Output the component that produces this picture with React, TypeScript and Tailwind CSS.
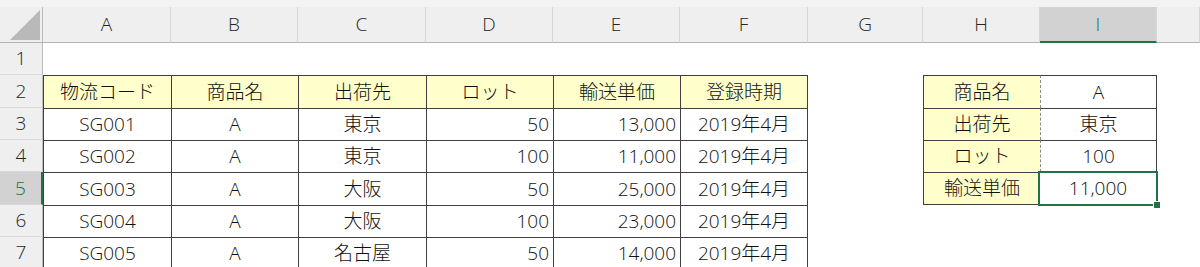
import React from 'react';

const letters = ['A', 'B', 'C', 'D', 'E', 'F', 'G', 'H', 'I', ''];

const headerRow = ['物流コード', '商品名', '出荷先', 'ロット', '輸送単価', '登録時期'];

const dataRows = [
  ['SG001', 'A', '東京', '50', '13,000', '2019年4月'],
  ['SG002', 'A', '東京', '100', '11,000', '2019年4月'],
  ['SG003', 'A', '大阪', '50', '25,000', '2019年4月'],
  ['SG004', 'A', '大阪', '100', '23,000', '2019年4月'],
  ['SG005', 'A', '名古屋', '50', '14,000', '2019年4月'],
];

// lookup table on the right (H/I), rows 2-5
const lookup = [
  ['商品名', 'A'],
  ['出荷先', '東京'],
  ['ロット', '100'],
  ['輸送単価', '11,000'],
];

// D and E hold numbers -> right aligned
const rightAligned = [3, 4];

const RowHead: React.FC<{ n: number; active?: boolean }> = ({ n, active }) => (
  <div
    className={`flex items-center justify-center text-[19px] leading-none border-b border-b-[#d9d9d9] ${
      active
        ? 'bg-[#d2d2d2] text-[#217346] border-r-2 border-r-[#217346]'
        : 'bg-[#efefef] text-[#262626] border-r border-r-[#bdbdbd]'
    }`}
  >
    {n}
  </div>
);

export default function App() {
  return (
    <div className="w-[1200px] h-[267px] overflow-hidden bg-white font-['Open_Sans','Noto_Sans_CJK_JP',sans-serif] font-light text-[#111]">
      <div className="grid grid-cols-[43px_128px_127px_128px_127px_127px_128px_115px_117px_117px_43px] grid-rows-[7px_36px_32px_33px_32px_32px_33px_32px_32px]">
        {/* top strip */}
        <div className="col-span-11 bg-[#f3f3f3]" />

        {/* column headers */}
        <div className="flex items-end justify-end pr-[2px] pb-[2px] bg-[#efefef] border-r border-r-[#bdbdbd] border-b border-b-[#b4b4b4]">
          <svg width="30" height="30" viewBox="0 0 30 30">
            <polygon points="30,0 30,30 0,30" fill="#b9b9b9" />
          </svg>
        </div>
        {letters.map((l, i) => (
          <div
            key={i}
            className={`flex items-center justify-center text-[19px] leading-none border-r border-r-[#d6d6d6] ${
              l === 'I'
                ? 'bg-[#d2d2d2] text-[#217346] border-b-2 border-b-[#217346]'
                : 'bg-[#efefef] text-[#262626] border-b border-b-[#b4b4b4]'
            }`}
          >
            {l}
          </div>
        ))}

        {/* row 1 */}
        <RowHead n={1} />
        {letters.map((_, i) => (
          <div key={i} />
        ))}

        {/* row 2: table headers + lookup first row */}
        <RowHead n={2} />
        {headerRow.map((t, i) => (
          <div
            key={i}
            className={`flex items-center justify-center text-[19px] leading-none bg-[#ffffcc] border-l border-t border-[#404040] ${
              i === 5 ? 'border-r' : ''
            }`}
          >
            {t}
          </div>
        ))}
        <div />
        <div className="flex items-center justify-center text-[19px] leading-none bg-[#ffffcc] border-l border-t border-[#404040]">
          {lookup[0][0]}
        </div>
        <div className="flex items-center justify-center text-[19px] leading-none border-t border-r border-[#404040] border-l border-l-[#8c8c8c] [border-left-style:dashed]">
          {lookup[0][1]}
        </div>
        <div />

        {/* rows 3-7 */}
        {dataRows.map((row, r) => {
          const rowNo = r + 3;
          const lk = lookup[r + 1];
          const selected = rowNo === 5;
          return (
            <React.Fragment key={r}>
              <RowHead n={rowNo} active={selected} />
              {row.map((t, i) => (
                <div
                  key={i}
                  className={`flex items-center text-[19px] leading-none border-l border-t border-[#404040] ${
                    i === 5 ? 'border-r' : ''
                  } ${rightAligned.includes(i) ? 'justify-end pr-[4px]' : 'justify-center'}`}
                >
                  {t}
                </div>
              ))}
              <div />
              {lk ? (
                <>
                  <div
                    className={`flex items-center justify-center text-[19px] leading-none bg-[#ffffcc] border-l border-t border-[#404040] ${
                      selected ? 'border-b' : ''
                    }`}
                  >
                    {lk[0]}
                  </div>
                  <div
                    className={`relative flex items-center justify-center text-[19px] leading-none border-t border-r border-[#404040] ${
                      selected ? 'border-b' : 'border-l border-l-[#8c8c8c] [border-left-style:dashed]'
                    }`}
                  >
                    {lk[1]}
                    {selected && (
                      <div className="absolute -left-[2px] -top-[2px] -right-[2px] -bottom-[2px] border-2 border-[#217346]">
                        <div className="absolute -right-[5px] -bottom-[5px] w-[8px] h-[8px] bg-[#217346] border border-white" />
                      </div>
                    )}
                  </div>
                </>
              ) : (
                <>
                  <div />
                  <div />
                </>
              )}
              <div />
            </React.Fragment>
          );
        })}
      </div>
    </div>
  );
}
